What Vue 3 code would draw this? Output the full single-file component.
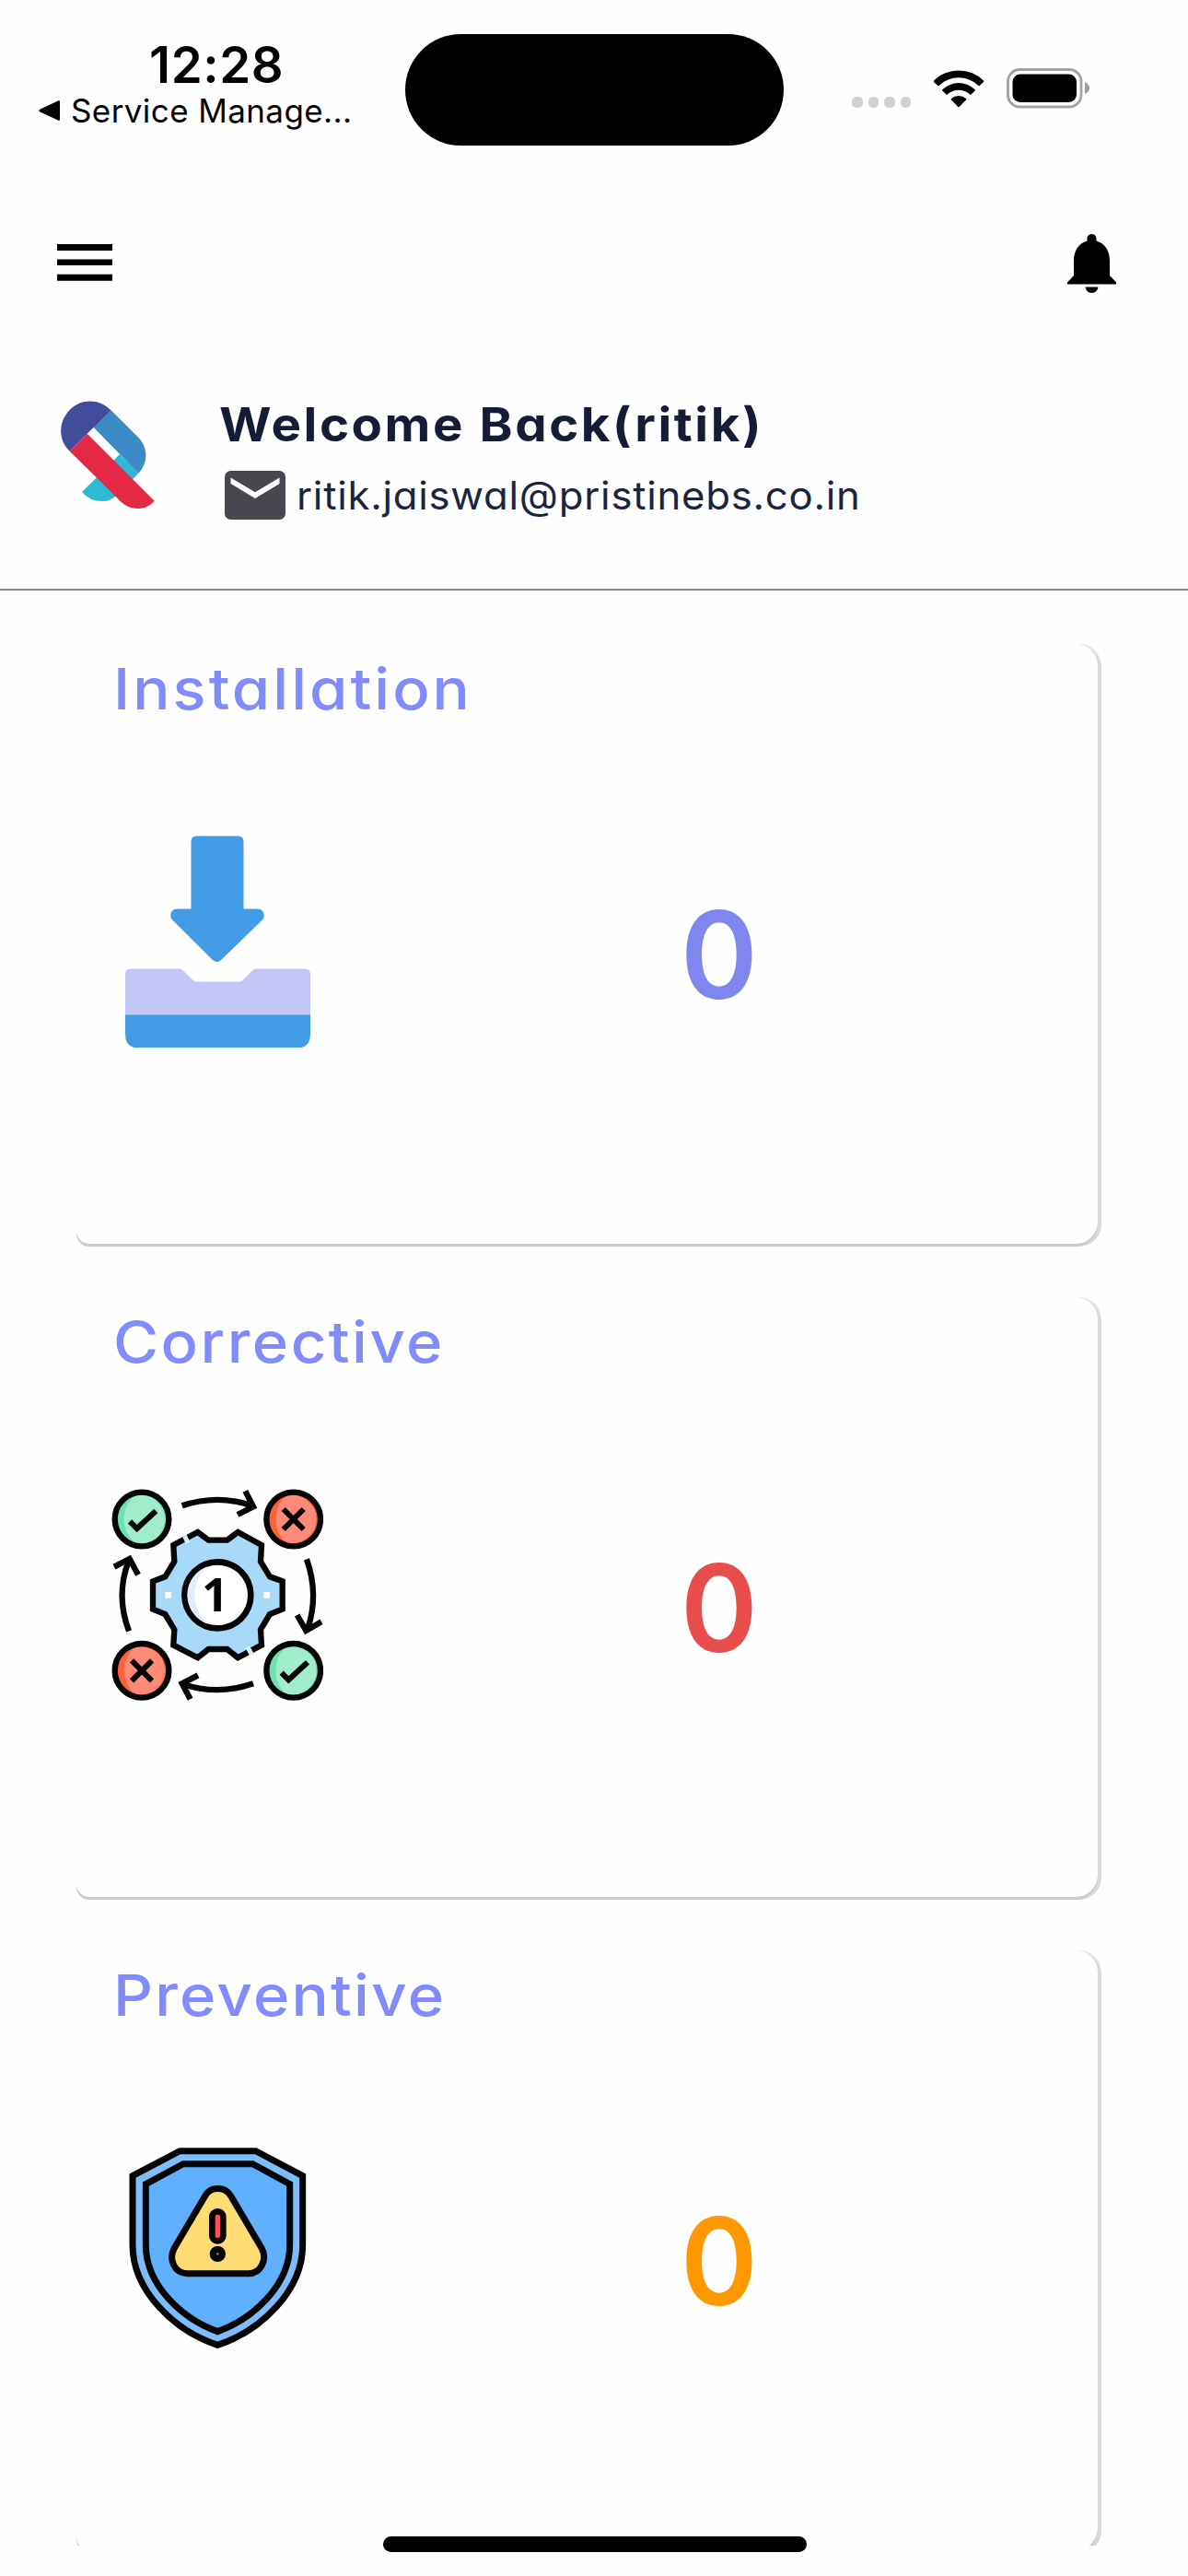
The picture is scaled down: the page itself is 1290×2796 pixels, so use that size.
<script setup>
const cards = [
  { key: 'install', title: 'Installation', value: 0, color: '#7f86ee', spacing: '2.8px' },
  { key: 'corrective', title: 'Corrective', value: 0, color: '#e84c4c', spacing: '2.3px' },
  { key: 'preventive', title: 'Preventive', value: 0, color: '#ff9800', spacing: '2.1px' },
]
</script>

<template>
  <div class="screen">
    <header class="status">
      <div class="clock">
        <div class="time">12:28</div>
        <div class="back">
          <svg width="24" height="24" viewBox="0 0 24 24"><path d="M21.500 1.200 1.600 10.600q-2.400 1.400 0 2.800l19.900 9.400q1.500.4 1.500-1.200V2.400Q23 .8 21.500 1.200Z" /></svg>
          <span>Service Manage...</span>
        </div>
      </div>
      <div class="island"></div>
      <div class="signal"><i v-for="n in 4" :key="n"></i></div>
      <svg class="wifi" width="56" height="42" viewBox="0 0 56 42">
        <path d="M1 12.500a38.500 38.500 0 0 1 54 0q.6.700 0 1.400l-4.300 4.100q-.6.500-1.200 0a31 31 0 0 0-43 0q-.6.500-1.200 0L1 13.900q-.6-.7 0-1.400Z" />
        <path d="M10.300 22.200a25.500 25.500 0 0 1 35.400 0q.6.600 0 1.200l-4.200 4.200q-.5.500-1.100 0a18 18 0 0 0-24.800 0q-.6.500-1.100 0l-4.200-4.200q-.6-.6 0-1.200Z" />
        <path d="M20 32a12.500 12.500 0 0 1 16 0q.7.600.1 1.300L28.600 41q-.6.600-1.200 0l-7.500-7.700Q19.300 32.600 20 32Z" />
      </svg>
      <svg class="battery" width="92" height="44" viewBox="0 0 92 44">
        <rect x="1.500" y="1.500" width="79.500" height="40.500" rx="13" fill="none" stroke="#a5a0a1" stroke-width="2.800" />
        <rect x="6.500" y="6.500" width="69.500" height="30.500" rx="8.500" />
        <path d="M85 15v13q5-2.500 5-6.500T85 15Z" fill="#a09b9c" />
      </svg>
    </header>

    <nav class="bar">
      <svg width="60" height="40" viewBox="0 0 60 40"><path d="M0 0h60v7H0zM0 16.500h60v6.600H0zM0 32.700h60v7H0z" /></svg>
      <svg width="53" height="65" viewBox="0 0 53 65">
        <path d="M26.500 0c3 0 5 2.200 5 5v2.600C40.500 10 46 18 46 29v16l7 7.500v2H0v-2L7 45V29C7 18 12.500 10 21.500 7.600V5c0-2.800 2-5 5-5Z" />
        <path d="M19.600 57.600h13.800c-.5 4-3.400 6.400-6.900 6.400s-6.400-2.400-6.900-6.400Z" />
      </svg>
    </nav>

    <section class="profile">
      <svg class="logo" width="104" height="120" viewBox="75 72 312 360">
        <path d="M147 372 245 275 270 249 331 311 262 380Q242 402 212 402 172 402 147 372Z" fill="#2bb9d4" />
        <path d="M183 160 240 104 329 193C362 225 365 275 331 311Z" fill="#3c8ac6" />
        <path d="M107 239C69 203 69 144 107 105 144 67 203 67 241 106Z" fill="#434c9a" />
        <path d="M164 184 184 164 268 249 250 267Z" fill="#fff" />
        <path d="M164 182 383 401C354 433 307 434 275 405L107 239Z" fill="#e52945" />
      </svg>
      <div class="who">
        <div class="welcome">Welcome Back(ritik)</div>
        <div class="mail">
          <svg width="66" height="53" viewBox="0 0 66 53">
            <rect width="66" height="53" rx="6.500" fill="#4a4650" />
            <path d="M6.500 7.500 33 23.300 59.500 7.500v6.600L33 30 6.500 14Z" fill="#fff" />
          </svg>
          <span>ritik.jaiswal@pristinebs.co.in</span>
        </div>
      </div>
    </section>

    <main class="list">
      <article v-for="card in cards" :key="card.key" class="card">
        <h2 :style="{ letterSpacing: card.spacing }">{{ card.title }}</h2>
        <div class="row">
          <svg v-if="card.key === 'install'" width="230" height="230" viewBox="0 0 230 230">
            <path d="M93 .5h45q6 0 6 6v73h15c6.500 0 9.500 7 5.500 11.800L119.500 135q-4.500 4-9 0L66.500 91.300C62.500 86.500 65.500 79.500 72 79.500h15v-73q0-6 6-6Z" transform="translate(-.5)" fill="#419be5" />
            <path d="M21 144.500h53q2.200 0 3.500 1.500l11 11q2 1.500 4 1.500h46q2 0 4-1.500l11-11q2-1.500 4-1.500h52.500q6 0 6 6V195H15v-44.500q0-6 6-6Z" fill="#c3c7f7" />
            <path d="M15 194.500h201v21q0 15-14 15H29q-14 0-14-15Z" fill="#419be5" />
          </svg>

          <svg v-else-if="card.key === 'corrective'" width="230" height="230" viewBox="63 48 690 690">
            <path d="M265 231 344 189 379 215H440L475 189 552 231 549 285 579 334 620 349V440L579 456 549 506 552 557 475 598 440 570H379L344 598 265 557 268 506 238 456 198 440V349L238 334 268 285Z" fill="#a9d9f8" stroke="#050505" stroke-width="19" />
            <path d="M300 198 312 224M506 562 520 588" stroke="#d9eefb" stroke-width="15" />
            <circle cx="409" cy="394" r="108" fill="#fff" stroke="#050505" stroke-width="20" />
            <path d="M378 300a99 99 0 0 0 0 188Q334 450 334 394T378 300Z" fill="#e2ebff" />
            <text x="401" y="447" text-anchor="middle" class="one">1</text>
            <path d="M238 384h20v20h-20zM559 384h20v20h-20z" fill="#fff" />
            <g v-for="(b, i) in [[162, 147, 1], [656, 147, 0], [162, 640, 0], [656, 640, 1]]" :key="i" :transform="`translate(${b[0]} ${b[1]})`">
              <circle r="87" :fill="b[2] ? '#6fe0b0' : '#ff6038'" />
              <path d="M-22-77Q-58-48-58 0T-22 77A79 79 0 1 0-22-77Z" :fill="b[2] ? '#a1edcb' : '#ff8a78'" />
              <circle r="88" fill="none" stroke="#050505" stroke-width="19" />
              <path v-if="b[2]" d="M-39 7-16 30 46-27" fill="none" stroke="#050505" stroke-width="18" />
              <path v-else d="M-33-33 33 33M33-33-33 33" stroke="#050505" stroke-width="18" />
            </g>
            <g fill="none" stroke="#050505" stroke-width="19">
              <path d="M293 103Q409 64 520 103M499 55 525 106 474 132" />
              <path d="M699 277Q740 394 702 504M668 459 697 510 747 481" />
              <path d="M525 682Q409 722 296 684M320 733 293 682 345 655" />
              <path d="M120 511Q76 394 119 283M150 328 122 276 72 302" />
            </g>
          </svg>

          <svg v-else width="230" height="230" viewBox="3 45 690 690">
            <path d="M226 74H473L626 155V380C626 528 491 659 349 706 207 659 72 528 72 380V155Z" fill="#7fbcfc" stroke="#050505" stroke-width="21" />
            <path d="M237 116H463L584 182V380C584 510 466 620 349 662 232 620 115 510 115 380V182Z" fill="#60b0fd" stroke="#050505" stroke-width="21" />
            <path d="M309 219C326 189 373 189 391 219L492 390C512 426 491 473 449 473H250C208 473 188 426 208 390Z" fill="#ffdc74" stroke="#050505" stroke-width="21" />
            <rect x="331" y="271" width="36" height="96" rx="17" fill="#fb5060" stroke="#050505" stroke-width="20" />
            <circle cx="349" cy="409" r="15" fill="#fb5060" stroke="#050505" stroke-width="22" />
          </svg>
          <strong :style="{ color: card.color }">{{ card.value }}</strong>
        </div>
      </article>
    </main>
    <div class="home"></div>
  </div>
</template>

<style>
body { background: #fefefe; }
</style>

<style scoped>
.screen {
  position: relative;
  width: 1290px;
  height: 2796px;
  overflow: hidden;
  display: flex;
  flex-direction: column;
  background: #fefefe;
  font-family: Inter, "Liberation Sans", sans-serif;
  color: #000;
  white-space: nowrap;
}
svg { display: block; flex: none; }
.status { height: 190px; display: flex; align-items: flex-start; flex: none; }
.clock { width: 440px; flex: none; }
.time { margin: 38px 0 0 162px; font-size: 54.500px; line-height: 65px; font-weight: 600; letter-spacing: 0.600px; }
.back { display: flex; align-items: center; margin: -5px 0 0 42px; gap: 11px; font-size: 35px; line-height: 44px; letter-spacing: 0.400px; }
.island { width: 411px; height: 121px; margin-top: 37px; border-radius: 61px; background: #000; flex: none; }
.signal { display: flex; gap: 6px; margin: 105px 0 0 74px; }
.signal i { width: 11.500px; height: 11.500px; border-radius: 5px; background: #d1d1d1; }
.wifi { margin: 75px 0 0 24px; }
.battery { margin: 74px 0 0 24px; }
.bar { height: 130px; flex: none; display: flex; justify-content: space-between; align-items: flex-start; padding: 64px 78px 0 62px; box-sizing: border-box; }
.bar svg:first-child { margin-top: 11px; }
.profile { height: 321px; flex: none; box-sizing: border-box; border-bottom: 2px solid #8f888a; padding: 114px 0 0 65px; display: flex; }
.who { margin-left: 69px; }
.welcome { font-size: 51px; line-height: 62px; font-weight: 700; color: #141d35; margin-top: -4px; letter-spacing: 2.400px; font-feature-settings: "cv11"; transform: scaleX(1.07); transform-origin: left; }
.mail { display: flex; align-items: center; margin: 18px 0 0 6px; gap: 12px; font-size: 42px; line-height: 54px; color: #1b2440; letter-spacing: 0.700px; font-feature-settings: "cv11"; }
.mail span { display: block; position: relative; top: 1px; transform: scaleX(1.04); transform-origin: left; }
.list { height: 2122px; overflow: hidden; flex: none; box-sizing: border-box; padding: 58px 98px 0 83px; display: flex; flex-direction: column; gap: 58px; }
.card { height: 651px; flex: none; box-sizing: border-box; padding: 11px 0 0 38px; border-radius: 24px 24px 24px 14px; background: #fefefe; box-shadow: 0 3px 0 #c9cad2, 4px 3px 0 #dadadb, 4px 0 0 #e6e6e6; }
h2 { margin: 0 0 122px 2px; font-size: 62px; line-height: 75px; font-weight: 500; color: #818bfb; font-feature-settings: "cv11"; transform: scaleX(1.08); transform-origin: left; width: 600px; }
.row { display: flex; align-items: flex-start; }
strong { width: 120px; margin: 64px 0 0 370px; text-align: center; font-size: 131px; line-height: 131px; font-weight: 600; transform: scaleX(0.97); }
.one { font: 700 150px "Noto Sans", sans-serif; fill: #050505; }
.home { position: absolute; left: 416px; top: 2753px; width: 460px; height: 17px; border-radius: 9px; background: #000; }
</style>
